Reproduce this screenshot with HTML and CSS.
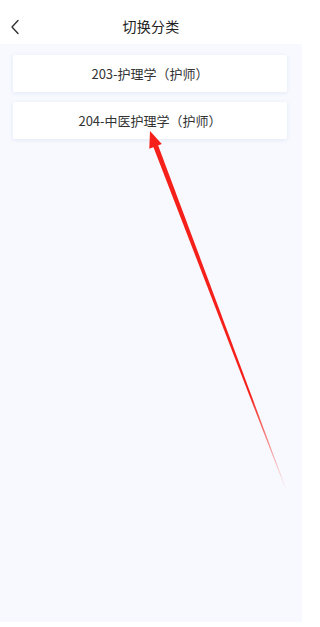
FILE: index.html
```html
<!DOCTYPE html>
<html lang="zh">
<head>
<meta charset="utf-8">
<link rel="stylesheet" href="styles.css">
</head>
<body>
<div class="page">
  <header class="header">
    <svg class="back" width="10" height="16" viewBox="0 0 10 16"><path d="M8 1.5 L2 8 L8 14.5" fill="none" stroke="#333" stroke-width="1.4" stroke-linecap="round" stroke-linejoin="round"/></svg>
    <h1 class="title">切换分类</h1>
  </header>
  <main class="content">
    <div class="card">203-护理学（护师）</div>
    <div class="card">204-中医护理学（护师）</div>
  </main>
</div>
<svg class="arrow" width="309" height="627" viewBox="0 0 309 627">
  <defs>
    <linearGradient id="fade" gradientUnits="userSpaceOnUse" x1="155" y1="146" x2="287" y2="491">
      <stop offset="0" stop-color="#f5201a"/>
      <stop offset="0.72" stop-color="#f5201a"/>
      <stop offset="1" stop-color="#f5201a" stop-opacity="0"/>
    </linearGradient>
  </defs>
  <polygon points="150,131 149.3,148.8 161.8,144" fill="#f5201a"/>
  <polygon points="153.2,146.6 158,144.9 287,491 286.3,491.2" fill="url(#fade)"/>
</svg>
</body>
</html>
```

FILE: styles.css
```css
html, body {
  margin: 0;
  padding: 0;
  background: #ffffff;
}
body {
  width: 309px;
  height: 627px;
  overflow: hidden;
  position: relative;
  font-family: "Noto Sans CJK SC", "Noto Sans", sans-serif;
  color: #333333;
}
.page {
  width: 302px;
}
.header {
  height: 44px;
  box-sizing: border-box;
  padding-top: 8px;
  display: flex;
  align-items: center;
  justify-content: center;
  position: relative;
  background: #ffffff;
}
.back {
  position: absolute;
  left: 10px;
  top: 19px;
}
.title {
  margin: 0;
  font-size: 14px;
  font-weight: 400;
  color: #222222;
  letter-spacing: 0.2px;
}
.content {
  height: 578px;
  box-sizing: border-box;
  background: #f7f9fe;
  padding: 11px 15px 0 13px;
  display: flex;
  flex-direction: column;
  gap: 10px;
}
.card {
  height: 37px;
  background: #ffffff;
  border-radius: 2px;
  box-shadow: 0 1px 4px rgba(200, 210, 235, 0.45);
  display: flex;
  align-items: center;
  justify-content: center;
  font-size: 13px;
  color: #333333;
}
.arrow {
  position: absolute;
  left: 0;
  top: 0;
  pointer-events: none;
}
```
